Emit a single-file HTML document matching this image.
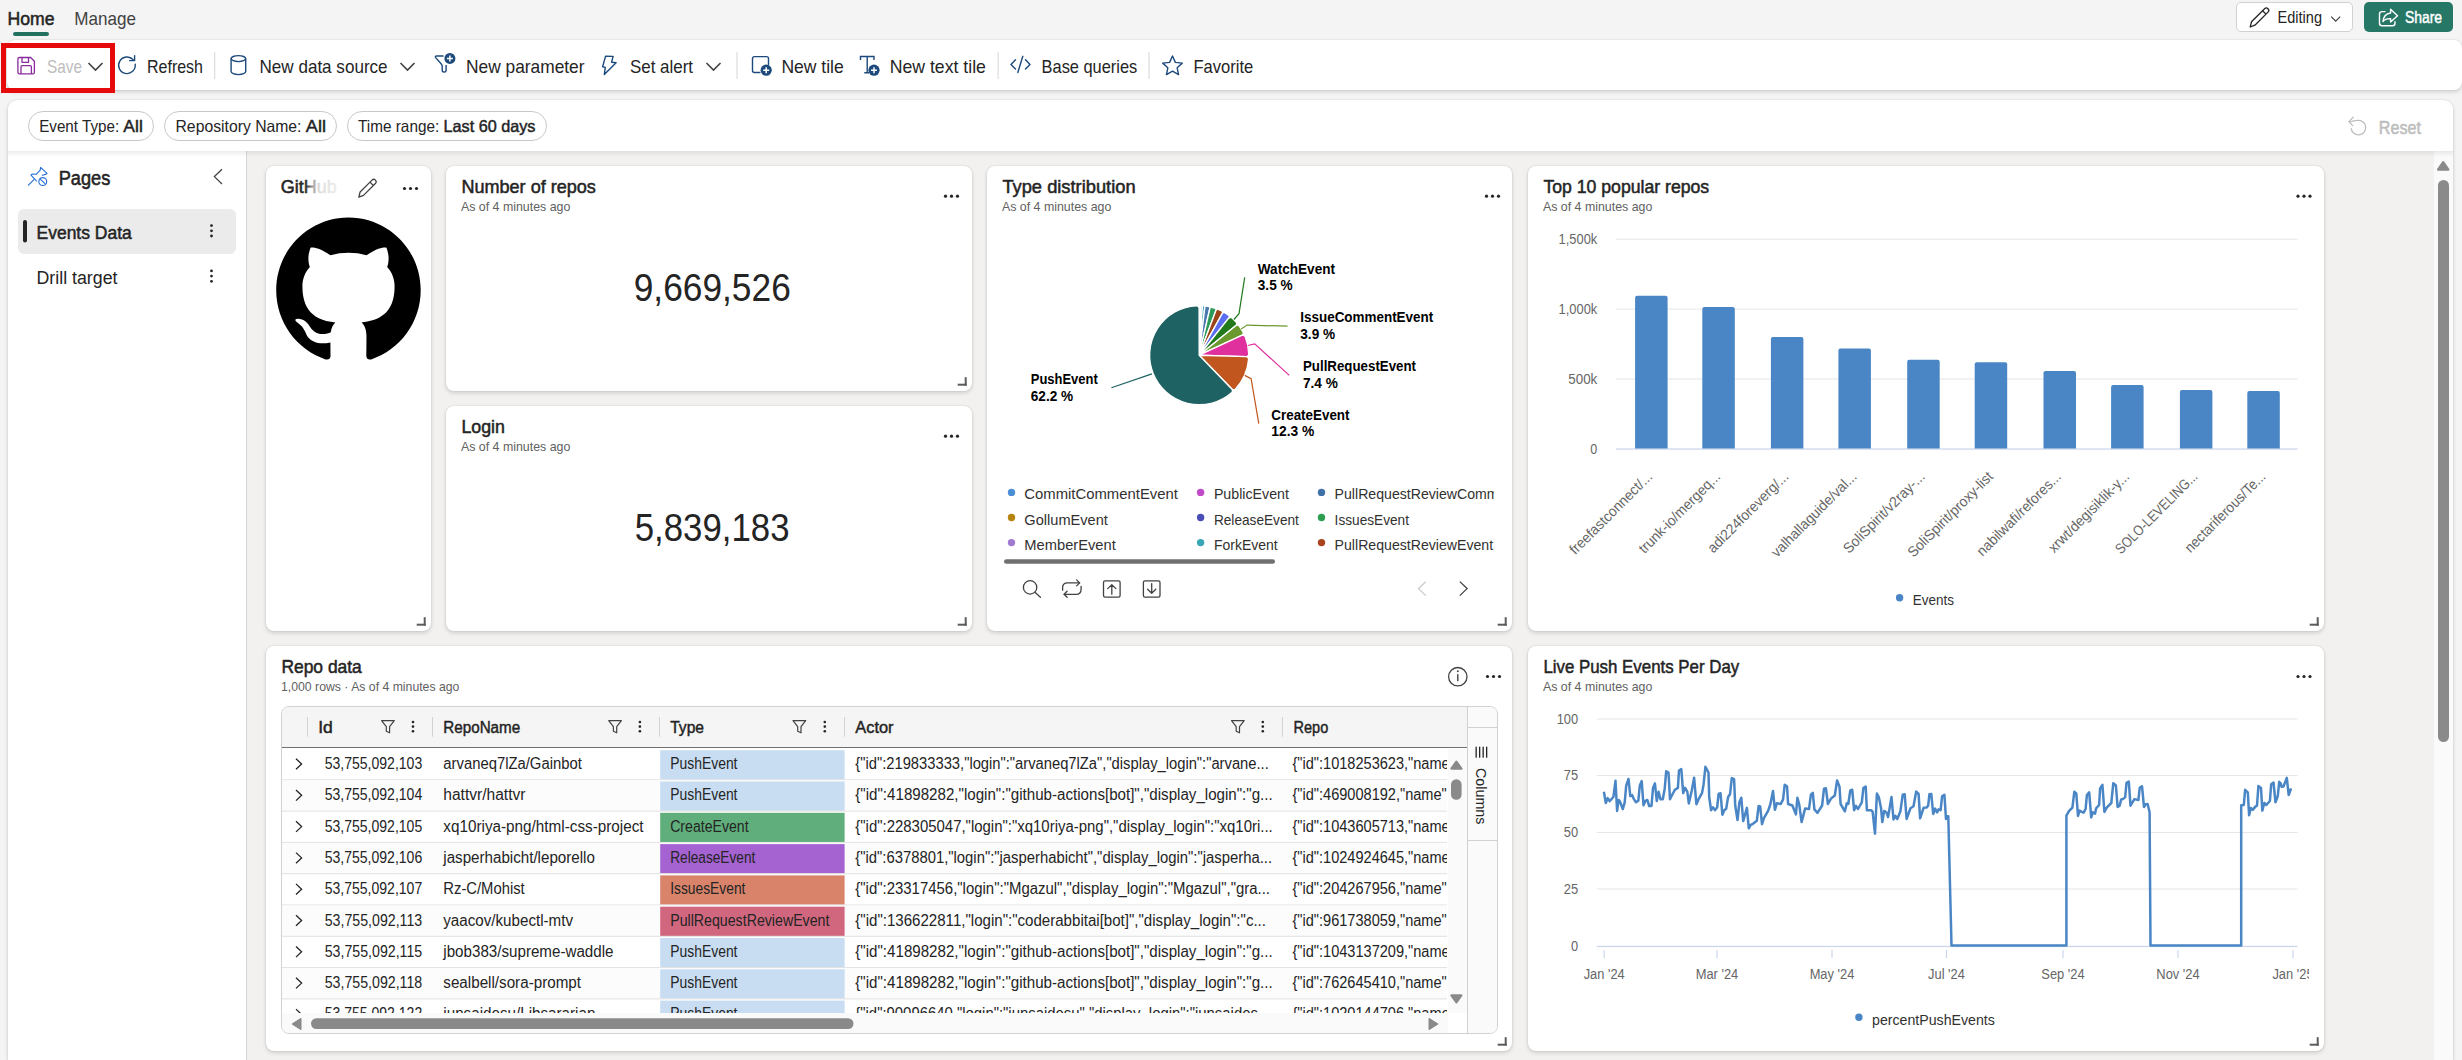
<!DOCTYPE html><html><head><meta charset="utf-8"><title>Dashboard</title><style>
*{box-sizing:border-box}html,body{margin:0;padding:0}
body{width:2462px;height:1060px;overflow:hidden;position:relative;background:#f4f4f4;font-family:"Liberation Sans",sans-serif}
.card{position:absolute;background:#fff;border-radius:8px;box-shadow:0 0 2px rgba(0,0,0,.12),0 2px 4px rgba(0,0,0,.14)}
svg.ov{position:absolute;left:0;top:0;z-index:10}
svg text{font-family:"Liberation Sans",sans-serif}
</style></head><body>
<div class="card" style="left:7px;top:40px;width:2455px;height:50px;border-radius:8px"></div>
<div style="position:absolute;left:1px;top:43px;width:114px;height:50px;border:5px solid #e60a0a;z-index:5"></div>
<div style="position:absolute;left:8px;top:100px;width:2445px;height:960px;background:#fff;border-radius:9px 9px 0 0;box-shadow:0 0 2px rgba(0,0,0,.12),0 2px 4px rgba(0,0,0,.14)"></div>
<div style="position:absolute;left:247px;top:151px;width:2187px;height:909px;background:#f2f1f0"></div>
<div style="position:absolute;left:246px;top:151px;width:1px;height:909px;background:#d6d6d6"></div>
<div style="position:absolute;left:2434px;top:151px;width:19px;height:909px;background:#fafafa"></div>
<div style="position:absolute;left:8px;top:151px;width:2445px;height:6px;background:linear-gradient(rgba(0,0,0,.07),rgba(0,0,0,0))"></div>
<div style="position:absolute;left:2236px;top:2px;width:117px;height:30px;border:1px solid #d1d1d1;border-radius:5px;background:#fff"></div>
<div style="position:absolute;left:2364px;top:2px;width:89px;height:30px;border-radius:5px;background:#277767"></div>
<div style="position:absolute;left:28px;top:111px;width:126px;height:30px;border:1px solid #c8c8c8;border-radius:15px"></div>
<div style="position:absolute;left:164px;top:111px;width:173px;height:30px;border:1px solid #c8c8c8;border-radius:15px"></div>
<div style="position:absolute;left:347px;top:111px;width:200px;height:30px;border:1px solid #c8c8c8;border-radius:15px"></div>
<div style="position:absolute;left:18px;top:209px;width:218px;height:45px;background:#ebebeb;border-radius:6px"></div>
<div class="card" style="left:266px;top:166px;width:165px;height:465px"></div>
<div class="card" style="left:446px;top:166px;width:526px;height:225px"></div>
<div class="card" style="left:446px;top:406px;width:526px;height:225px"></div>
<div class="card" style="left:987px;top:166px;width:525px;height:465px"></div>
<div class="card" style="left:1528px;top:166px;width:796px;height:465px"></div>
<div class="card" style="left:266px;top:646px;width:1246px;height:405px"></div>
<div class="card" style="left:1528px;top:646px;width:796px;height:405px"></div>
<div style="position:absolute;left:281px;top:706px;width:1217px;height:328px;border:1px solid #d1d1d1;border-radius:8px;overflow:hidden;background:#fff"><div style="position:absolute;left:0;top:0;width:1185px;height:41px;background:#f5f5f5;border-bottom:1.5px solid #707070"></div><div style="position:absolute;left:1185px;top:0;width:32px;height:328px;background:#fafafa;border-left:1px solid #d1d1d1"></div><div style="position:absolute;left:1185px;top:19.5px;width:32px;height:1px;background:#d1d1d1"></div><div style="position:absolute;left:1185px;top:133px;width:32px;height:1px;background:#d1d1d1"></div><div style="position:absolute;left:1166px;top:42px;width:19px;height:264px;background:#fafafa"></div><div style="position:absolute;left:0;top:306px;width:1166px;height:22px;background:#fafafa"></div></div>
<svg class="ov" width="2462" height="1060" viewBox="0 0 2462 1060">
<text x="7.60" y="24.90" font-size="19" font-weight="400" fill="#242424" stroke="#242424" stroke-width="0.53" stroke-linejoin="round" text-anchor="start" textLength="47.00" lengthAdjust="spacingAndGlyphs" >Home</text>
<text x="74.30" y="24.90" font-size="19" font-weight="400" fill="#424242" text-anchor="start" textLength="61.70" lengthAdjust="spacingAndGlyphs" >Manage</text>
<rect x="13" y="32" width="36" height="4" rx="2" fill="#23725f"/>
<path d="M2443.2 162.3 L2448.3 169.6 H2438.1 Z" fill="#8a8a8a" stroke="#8a8a8a" stroke-width="2.4" stroke-linejoin="round"/>
<rect x="2438" y="180" width="11" height="562" rx="5.5" fill="#8a8a8a"/>
<g fill="none" stroke="#8b2a9e" stroke-width="1.3" stroke-linejoin="round"><path d="M19.6 57.5 H30.6 L34.4 61.3 V72.2 Q34.4 73.9 32.7 73.9 H19.6 Q17.9 73.9 17.9 72.2 V59.2 Q17.9 57.5 19.6 57.5 Z"/><path d="M22 57.5 V62.3 H28.5 V57.5"/><path d="M21 73.9 V66.8 Q21 65.6 22.2 65.6 H30.2 Q31.4 65.6 31.4 66.8 V73.9"/></g>
<text x="47.00" y="73.20" font-size="18.5" font-weight="400" fill="#bdbdbd" text-anchor="start" textLength="35.00" lengthAdjust="spacingAndGlyphs" >Save</text>
<path d="M88.5 63 L95.5 70 L102.5 63" fill="none" stroke="#424242" stroke-width="1.6"/>
<g fill="none" stroke="#1d4a7c" stroke-width="1.4" stroke-linecap="round" stroke-linejoin="round"><path d="M133.2 59.8 A8.3 8.3 0 1 0 135.2 64.2"/><path d="M134.6 55.6 V60.6 H129.6"/></g>
<text x="147.00" y="73.20" font-size="18.5" font-weight="400" fill="#242424" text-anchor="start" textLength="56.00" lengthAdjust="spacingAndGlyphs" >Refresh</text>
<rect x="214.2" y="52" width="1" height="27" fill="#d6d6d6"/>
<g fill="none" stroke="#1d4a7c" stroke-width="1.4"><ellipse cx="238.4" cy="58.6" rx="7.3" ry="3"/><path d="M231.1 58.6 V71.6 A7.3 3 0 0 0 245.7 71.6 V58.6"/></g>
<text x="259.50" y="73.20" font-size="18.5" font-weight="400" fill="#242424" text-anchor="start" textLength="128.10" lengthAdjust="spacingAndGlyphs" >New data source</text>
<path d="M400.5 63 L407.5 70 L414.5 63" fill="none" stroke="#424242" stroke-width="1.6"/>
<g fill="none" stroke="#1d4a7c" stroke-width="1.4" stroke-linejoin="round"><path d="M443.6 56 H436.8 Q434.4 56 435.9 57.9 L441.3 64 Q442.2 65 442.2 66.4 V70.3 Q442.2 72.1 444.15 72.1 Q446.1 72.1 446.1 70.3 V65"/></g><circle cx="449.9" cy="58.4" r="5.5" fill="#1d4a7c"/><path d="M449.9 55.4 V61.4 M446.9 58.4 H452.9" stroke="#fff" stroke-width="1.5"/>
<text x="466.00" y="73.20" font-size="18.5" font-weight="400" fill="#242424" text-anchor="start" textLength="118.50" lengthAdjust="spacingAndGlyphs" >New parameter</text>
<path d="M605.6 56.1 L613.1 56.4 L611.6 62.2 L616.1 62.7 L604.3 74.6 L605.3 67.4 L602.6 66.7 Z" fill="none" stroke="#1d4a7c" stroke-width="1.4" stroke-linejoin="round"/>
<text x="630.00" y="73.20" font-size="18.5" font-weight="400" fill="#242424" text-anchor="start" textLength="63.00" lengthAdjust="spacingAndGlyphs" >Set alert</text>
<path d="M706.5 63 L713.5 70 L720.5 63" fill="none" stroke="#424242" stroke-width="1.6"/>
<rect x="736.5" y="52" width="1" height="27" fill="#d6d6d6"/>
<path d="M760.5 72.5 H754.5 Q752.5 72.5 752.5 70.5 V58.6 Q752.5 56.6 754.5 56.6 H766.5 Q768.5 56.6 768.5 58.6 V65" fill="none" stroke="#1d4a7c" stroke-width="1.4"/><circle cx="766.2" cy="70.2" r="5.6" fill="#1d4a7c"/><path d="M766.2 67.2 V73.2 M763.2 70.2 H769.2" stroke="#fff" stroke-width="1.5"/>
<text x="781.40" y="73.20" font-size="18.5" font-weight="400" fill="#242424" text-anchor="start" textLength="62.40" lengthAdjust="spacingAndGlyphs" >New tile</text>
<path d="M860.5 60 V56.5 H874 V60 M867.2 56.5 V72.7 M864.3 72.7 H869" fill="none" stroke="#1d4a7c" stroke-width="1.4"/><circle cx="874" cy="70.2" r="5.6" fill="#1d4a7c"/><path d="M874 67.2 V73.2 M871 70.2 H877" stroke="#fff" stroke-width="1.5"/>
<text x="889.70" y="73.20" font-size="18.5" font-weight="400" fill="#242424" text-anchor="start" textLength="96.20" lengthAdjust="spacingAndGlyphs" >New text tile</text>
<rect x="997.6" y="52" width="1" height="27" fill="#d6d6d6"/>
<path d="M1015.5 59.8 L1011 64.4 L1015.5 69 M1025.5 59.8 L1030 64.4 L1025.5 69 M1022.8 56.3 L1017.8 72.5" fill="none" stroke="#1d4a7c" stroke-width="1.4" stroke-linecap="round" stroke-linejoin="round"/>
<text x="1041.60" y="73.20" font-size="18.5" font-weight="400" fill="#242424" text-anchor="start" textLength="95.60" lengthAdjust="spacingAndGlyphs" >Base queries</text>
<rect x="1148.5" y="52" width="1" height="27" fill="#d6d6d6"/>
<path d="M1172.50,56.00 L1175.38,62.34 L1182.30,63.12 L1177.16,67.81 L1178.55,74.63 L1172.50,71.20 L1166.45,74.63 L1167.84,67.81 L1162.70,63.12 L1169.62,62.34 Z" fill="none" stroke="#1d4a7c" stroke-width="1.4" stroke-linejoin="round"/>
<text x="1193.50" y="73.20" font-size="18.5" font-weight="400" fill="#242424" text-anchor="start" textLength="59.80" lengthAdjust="spacingAndGlyphs" >Favorite</text>
<g fill="none" stroke="#242424" stroke-width="1.3" stroke-linejoin="round"><path d="M2250.2 27 L2251.5 21.8 L2264.6 8.7 Q2266.3 7 2268 8.7 Q2269.7 10.4 2268 12.1 L2254.9 25.2 Z"/><path d="M2262.6 10.7 L2266 14.1"/></g>
<text x="2277.50" y="23.10" font-size="16.5" font-weight="400" fill="#242424" text-anchor="start" textLength="44.50" lengthAdjust="spacingAndGlyphs" >Editing</text>
<path d="M2331.2 16.6 L2335.7 21.1 L2340.2 16.6" fill="none" stroke="#424242" stroke-width="1.2"/>
<g fill="none" stroke="#fff" stroke-width="1.4" stroke-linejoin="round" stroke-linecap="round"><path d="M2385 11.6 H2382 Q2379.5 11.6 2379.5 14.1 V23.3 Q2379.5 25.8 2382 25.8 H2392.5 Q2395 25.8 2395 23.3 V21.8"/><path d="M2390.6 9.3 L2397.5 15.7 L2390.6 21.9 V18.6 Q2385 18.4 2383 21.6 Q2383.6 13.9 2390.6 13 Z"/></g>
<text x="2404.90" y="23.20" font-size="16.5" font-weight="400" fill="#ffffff" stroke="#ffffff" stroke-width="0.46" stroke-linejoin="round" text-anchor="start" textLength="37.10" lengthAdjust="spacingAndGlyphs" >Share</text>
<text x="39.20" y="132.00" font-size="16.5" font-weight="400" fill="#242424" text-anchor="start" textLength="79.96" lengthAdjust="spacingAndGlyphs" >Event Type:</text>
<text x="123.38" y="132.00" font-size="16.5" font-weight="400" fill="#242424" stroke="#242424" stroke-width="0.46" stroke-linejoin="round" text-anchor="start" textLength="19.42" lengthAdjust="spacingAndGlyphs" >All</text>
<text x="175.50" y="132.00" font-size="16.5" font-weight="400" fill="#242424" text-anchor="start" textLength="126.01" lengthAdjust="spacingAndGlyphs" >Repository Name:</text>
<text x="305.88" y="132.00" font-size="16.5" font-weight="400" fill="#242424" stroke="#242424" stroke-width="0.46" stroke-linejoin="round" text-anchor="start" textLength="20.12" lengthAdjust="spacingAndGlyphs" >All</text>
<text x="358.00" y="132.00" font-size="16.5" font-weight="400" fill="#242424" text-anchor="start" textLength="81.22" lengthAdjust="spacingAndGlyphs" >Time range:</text>
<text x="443.48" y="132.00" font-size="16.5" font-weight="400" fill="#242424" stroke="#242424" stroke-width="0.46" stroke-linejoin="round" text-anchor="start" textLength="92.02" lengthAdjust="spacingAndGlyphs" >Last 60 days</text>
<g fill="none" stroke="#bdbdbd" stroke-width="1.3" stroke-linecap="round" stroke-linejoin="round"><path d="M2350.3 122 Q2353.6 120.1 2358.4 120.3 A7.3 7.3 0 1 1 2351.2 128.6"/><path d="M2353.2 117.3 L2348.9 121.6 L2352.6 125.6"/></g>
<text x="2378.80" y="133.90" font-size="18.5" font-weight="400" fill="#bdbdbd" stroke="#bdbdbd" stroke-width="0.51" stroke-linejoin="round" text-anchor="start" textLength="42.20" lengthAdjust="spacingAndGlyphs" >Reset</text>
<g fill="none" stroke="#2a72d6" stroke-width="1.15" stroke-linejoin="round" stroke-linecap="round"><path d="M28.4 185.2 L34 179.6"/><path d="M36.4 180.8 L31 175.2 Q31.3 174.2 32.2 174.1 L36.1 174.3 L40.2 170.2 L40.6 167.3 L47 173.4 L45.4 174.4 L42.2 175.2"/><circle cx="42.75" cy="181.5" r="3.95"/><path d="M40.2 179.1 L45.3 183.9"/></g>
<text x="58.70" y="184.70" font-size="19.5" font-weight="400" fill="#242424" stroke="#242424" stroke-width="0.54" stroke-linejoin="round" text-anchor="start" textLength="51.60" lengthAdjust="spacingAndGlyphs" >Pages</text>
<path d="M222 169.3 L214.4 176.6 L222 184" fill="none" stroke="#424242" stroke-width="1.3"/>
<rect x="23" y="220" width="4" height="22.6" rx="2" fill="#242424"/>
<text x="36.50" y="238.80" font-size="18" font-weight="400" fill="#242424" stroke="#242424" stroke-width="0.50" stroke-linejoin="round" text-anchor="start" textLength="95.30" lengthAdjust="spacingAndGlyphs" >Events Data</text>
<circle cx="211.5" cy="225.60000000000002" r="1.4" fill="#242424"/><circle cx="211.5" cy="230.8" r="1.4" fill="#242424"/><circle cx="211.5" cy="236.0" r="1.4" fill="#242424"/>
<text x="36.50" y="283.70" font-size="18" font-weight="400" fill="#242424" text-anchor="start" textLength="81.00" lengthAdjust="spacingAndGlyphs" >Drill target</text>
<circle cx="211.5" cy="270.90000000000003" r="1.4" fill="#242424"/><circle cx="211.5" cy="276.1" r="1.4" fill="#242424"/><circle cx="211.5" cy="281.3" r="1.4" fill="#242424"/>
<rect x="416.7" y="623.7" width="9" height="2" fill="#5c5c5c"/><rect x="423.7" y="617.2" width="2" height="8.5" fill="#5c5c5c"/>
<rect x="957.7" y="383.7" width="9" height="2" fill="#5c5c5c"/><rect x="964.7" y="377.2" width="2" height="8.5" fill="#5c5c5c"/>
<rect x="957.7" y="623.7" width="9" height="2" fill="#5c5c5c"/><rect x="964.7" y="617.2" width="2" height="8.5" fill="#5c5c5c"/>
<rect x="1497.7" y="623.7" width="9" height="2" fill="#5c5c5c"/><rect x="1504.7" y="617.2" width="2" height="8.5" fill="#5c5c5c"/>
<rect x="2309.7" y="623.7" width="9" height="2" fill="#5c5c5c"/><rect x="2316.7" y="617.2" width="2" height="8.5" fill="#5c5c5c"/>
<rect x="1497.7" y="1043.7" width="9" height="2" fill="#5c5c5c"/><rect x="1504.7" y="1037.2" width="2" height="8.5" fill="#5c5c5c"/>
<rect x="2309.7" y="1043.7" width="9" height="2" fill="#5c5c5c"/><rect x="2316.7" y="1037.2" width="2" height="8.5" fill="#5c5c5c"/>
<defs><linearGradient id="ghfade" x1="0" x2="1" y1="0" y2="0"><stop offset="0" stop-color="#242424"/><stop offset="0.44" stop-color="#2a2a2a"/><stop offset="0.56" stop-color="#9a9a9a"/><stop offset="0.68" stop-color="#dadada"/><stop offset="1" stop-color="#ececec"/></linearGradient></defs>
<text x="280.70" y="192.90" font-size="18.5" font-weight="400" fill="url(#ghfade)" stroke="url(#ghfade)" stroke-width="0.51" stroke-linejoin="round" text-anchor="start" textLength="56.00" lengthAdjust="spacingAndGlyphs" >GitHub</text>
<g fill="none" stroke="#424242" stroke-width="1.3" stroke-linejoin="round"><path d="M358.8 197.2 L360.1 192 L372 180.1 Q373.7 178.4 375.4 180.1 Q377.1 181.8 375.4 183.5 L363.5 195.4 Z"/><path d="M370 182.1 L373.4 185.5"/></g>
<circle cx="404.5" cy="188.5" r="1.6" fill="#242424"/><circle cx="410.5" cy="188.5" r="1.6" fill="#242424"/><circle cx="416.5" cy="188.5" r="1.6" fill="#242424"/>
<path d="M48.854 0C21.839 0 0 22 0 49.217c0 21.756 13.993 40.172 33.405 46.69 2.427.49 3.316-1.059 3.316-2.362 0-1.141-.08-5.052-.08-9.127-13.59 2.934-16.42-5.867-16.42-5.867-2.184-5.704-5.42-7.17-5.42-7.17-4.448-3.015.324-3.015.324-3.015 4.934.326 7.523 5.052 7.523 5.052 4.367 7.496 11.404 5.378 14.235 4.074.404-3.178 1.699-5.378 3.074-6.6-10.839-1.141-22.243-5.378-22.243-24.283 0-5.378 1.94-9.778 5.014-13.2-.485-1.222-2.184-6.275.486-13.038 0 0 4.125-1.304 13.426 5.052a46.97 46.97 0 0 1 12.214-1.63c4.125 0 8.33.571 12.213 1.63 9.302-6.356 13.427-5.052 13.427-5.052 2.67 6.763.97 11.816.485 13.038 3.155 3.422 5.015 7.822 5.015 13.2 0 18.905-11.404 23.06-22.324 24.283 1.78 1.548 3.316 4.481 3.316 9.126 0 6.6-.08 11.897-.08 13.526 0 1.304.89 2.853 3.316 2.364 19.412-6.52 33.405-24.935 33.405-46.691C97.707 22 75.788 0 48.854 0z" fill="#000" transform="translate(276.2,217.5) scale(1.48)"/>
<text x="461.40" y="192.80" font-size="18.5" font-weight="400" fill="#242424" stroke="#242424" stroke-width="0.51" stroke-linejoin="round" text-anchor="start" textLength="134.50" lengthAdjust="spacingAndGlyphs" >Number of repos</text>
<text x="461.00" y="210.80" font-size="13" font-weight="400" fill="#616161" text-anchor="start" textLength="109.30" lengthAdjust="spacingAndGlyphs" >As of 4 minutes ago</text>
<circle cx="945.5" cy="196.2" r="1.6" fill="#242424"/><circle cx="951.5" cy="196.2" r="1.6" fill="#242424"/><circle cx="957.5" cy="196.2" r="1.6" fill="#242424"/>
<text x="633.70" y="301.20" font-size="38.5" font-weight="400" fill="#242424" text-anchor="start" textLength="157.10" lengthAdjust="spacingAndGlyphs" >9,669,526</text>
<text x="461.40" y="432.80" font-size="18.5" font-weight="400" fill="#242424" stroke="#242424" stroke-width="0.51" stroke-linejoin="round" text-anchor="start" textLength="43.50" lengthAdjust="spacingAndGlyphs" >Login</text>
<text x="461.00" y="450.80" font-size="13" font-weight="400" fill="#616161" text-anchor="start" textLength="109.30" lengthAdjust="spacingAndGlyphs" >As of 4 minutes ago</text>
<circle cx="945.5" cy="436.2" r="1.6" fill="#242424"/><circle cx="951.5" cy="436.2" r="1.6" fill="#242424"/><circle cx="957.5" cy="436.2" r="1.6" fill="#242424"/>
<text x="634.70" y="541.20" font-size="38.5" font-weight="400" fill="#242424" text-anchor="start" textLength="154.80" lengthAdjust="spacingAndGlyphs" >5,839,183</text>
<text x="1002.40" y="192.80" font-size="18.5" font-weight="400" fill="#242424" stroke="#242424" stroke-width="0.51" stroke-linejoin="round" text-anchor="start" textLength="133.20" lengthAdjust="spacingAndGlyphs" >Type distribution</text>
<text x="1002.00" y="210.80" font-size="13" font-weight="400" fill="#616161" text-anchor="start" textLength="109.30" lengthAdjust="spacingAndGlyphs" >As of 4 minutes ago</text>
<circle cx="1486.5" cy="196.2" r="1.6" fill="#242424"/><circle cx="1492.5" cy="196.2" r="1.6" fill="#242424"/><circle cx="1498.5" cy="196.2" r="1.6" fill="#242424"/>
<path d="M1199.20 355.20 L1199.20 305.60 A49.6 49.6 0 0 1 1200.53 305.62 Z" fill="#c4a6e6" stroke="#fff" stroke-width="1.4" stroke-linejoin="round"/>
<path d="M1199.20 355.20 L1200.52 306.04 A0.42 0.42 0 0 1 1200.96 305.63 A49.6 49.6 0 0 1 1201.97 305.68 A0.42 0.42 0 0 1 1202.37 306.12 Z" fill="#8a8ad8" stroke="#fff" stroke-width="1.4" stroke-linejoin="round"/>
<path d="M1199.20 355.20 L1202.36 306.29 A0.58 0.58 0 0 1 1202.98 305.74 A49.6 49.6 0 0 1 1204.38 305.87 A0.58 0.58 0 0 1 1204.90 306.52 Z" fill="#3aa6b5" stroke="#fff" stroke-width="1.4" stroke-linejoin="round"/>
<path d="M1199.20 355.20 L1204.82 307.14 A1.20 1.20 0 0 1 1206.18 306.09 A49.6 49.6 0 0 1 1209.01 306.58 A1.20 1.20 0 0 1 1209.95 308.02 Z" fill="#4a78b0" stroke="#fff" stroke-width="1.4" stroke-linejoin="round"/>
<path d="M1199.20 355.20 L1209.88 308.32 A1.50 1.50 0 0 1 1211.72 307.21 A49.6 49.6 0 0 1 1215.14 308.23 A1.50 1.50 0 0 1 1216.06 310.18 Z" fill="#2e9a5a" stroke="#fff" stroke-width="1.4" stroke-linejoin="round"/>
<path d="M1199.20 355.20 L1216.01 310.31 A1.64 1.64 0 0 1 1218.18 309.37 A49.6 49.6 0 0 1 1221.71 311.00 A1.64 1.64 0 0 1 1222.40 313.26 Z" fill="#9c4516" stroke="#fff" stroke-width="1.4" stroke-linejoin="round"/>
<path d="M1199.20 355.20 L1222.29 313.46 A1.86 1.86 0 0 1 1224.88 312.77 A49.6 49.6 0 0 1 1228.54 315.21 A1.86 1.86 0 0 1 1228.90 317.87 Z" fill="#5b6ef0" stroke="#fff" stroke-width="1.4" stroke-linejoin="round"/>
<path d="M1199.20 355.20 L1228.51 318.35 A2.45 2.45 0 0 1 1232.06 318.04 A49.6 49.6 0 0 1 1236.13 322.09 A2.45 2.45 0 0 1 1235.84 325.63 Z" fill="#237a1d" stroke="#fff" stroke-width="1.4" stroke-linejoin="round"/>
<path d="M1199.20 355.20 L1235.72 325.73 A2.60 2.60 0 0 1 1239.46 326.24 A49.6 49.6 0 0 1 1242.97 331.86 A2.60 2.60 0 0 1 1241.77 335.44 Z" fill="#6a9a2e" stroke="#fff" stroke-width="1.4" stroke-linejoin="round"/>
<path d="M1199.20 355.20 L1241.77 335.44 A2.60 2.60 0 0 1 1245.28 336.84 A49.6 49.6 0 0 1 1248.78 353.93 A2.60 2.60 0 0 1 1246.11 356.59 Z" fill="#e0309e" stroke="#fff" stroke-width="1.4" stroke-linejoin="round"/>
<path d="M1199.20 355.20 L1246.11 356.59 A2.60 2.60 0 0 1 1248.62 359.41 A49.6 49.6 0 0 1 1235.58 388.92 A2.60 2.60 0 0 1 1231.80 388.96 Z" fill="#c2561f" stroke="#fff" stroke-width="1.4" stroke-linejoin="round"/>
<path d="M1199.20 355.20 L1231.80 388.96 A2.60 2.60 0 0 1 1231.63 392.73 A49.6 49.6 0 1 1 1196.37 305.68 A2.60 2.60 0 0 1 1199.12 308.27 Z" fill="#1f6263" stroke="#fff" stroke-width="1.4" stroke-linejoin="round"/>
<polyline points="1233.9,319.5 1239.0,313.7 1244.7,277.4" fill="none" stroke="#1f7a1f" stroke-width="1.2"/>
<polyline points="1241.2,328.9 1247.0,325.1 1287.5,326.2" fill="none" stroke="#6a9a2e" stroke-width="1.2"/>
<polyline points="1247.8,345.5 1254.7,343.8 1289.3,375.4" fill="none" stroke="#e0309e" stroke-width="1.2"/>
<polyline points="1244.7,375.4 1251.1,378.7 1258.8,423.7" fill="none" stroke="#c2561f" stroke-width="1.2"/>
<polyline points="1151.9,373.9 1111.4,387.8" fill="none" stroke="#1f6263" stroke-width="1.2"/>
<text x="1257.80" y="273.60" font-size="14" font-weight="700" fill="#000" text-anchor="start" textLength="77.20" lengthAdjust="spacingAndGlyphs" >WatchEvent</text>
<text x="1257.80" y="290.40" font-size="14" font-weight="700" fill="#000" text-anchor="start" textLength="34.80" lengthAdjust="spacingAndGlyphs" >3.5 %</text>
<text x="1300.30" y="322.20" font-size="14" font-weight="700" fill="#000" text-anchor="start" textLength="132.90" lengthAdjust="spacingAndGlyphs" >IssueCommentEvent</text>
<text x="1300.30" y="339.00" font-size="14" font-weight="700" fill="#000" text-anchor="start" textLength="34.80" lengthAdjust="spacingAndGlyphs" >3.9 %</text>
<text x="1303.00" y="370.80" font-size="14" font-weight="700" fill="#000" text-anchor="start" textLength="113.00" lengthAdjust="spacingAndGlyphs" >PullRequestEvent</text>
<text x="1303.00" y="387.60" font-size="14" font-weight="700" fill="#000" text-anchor="start" textLength="34.80" lengthAdjust="spacingAndGlyphs" >7.4 %</text>
<text x="1271.30" y="419.60" font-size="14" font-weight="700" fill="#000" text-anchor="start" textLength="78.20" lengthAdjust="spacingAndGlyphs" >CreateEvent</text>
<text x="1271.30" y="436.40" font-size="14" font-weight="700" fill="#000" text-anchor="start" textLength="43.00" lengthAdjust="spacingAndGlyphs" >12.3 %</text>
<text x="1030.80" y="383.90" font-size="14" font-weight="700" fill="#000" text-anchor="start" textLength="66.90" lengthAdjust="spacingAndGlyphs" >PushEvent</text>
<text x="1030.80" y="400.70" font-size="14" font-weight="700" fill="#000" text-anchor="start" textLength="42.40" lengthAdjust="spacingAndGlyphs" >62.2 %</text>
<defs><clipPath id="legclip"><rect x="995" y="470" width="499" height="100"/></clipPath></defs>
<g clip-path="url(#legclip)">
<circle cx="1011.5" cy="492.4" r="3.7" fill="#4d8fd6"/>
<text x="1024.30" y="499.40" font-size="14.5" font-weight="400" fill="#323130" text-anchor="start" textLength="153.60" lengthAdjust="spacingAndGlyphs" >CommitCommentEvent</text>
<circle cx="1011.5" cy="517.5" r="3.7" fill="#b5850f"/>
<text x="1024.30" y="524.50" font-size="14.5" font-weight="400" fill="#323130" text-anchor="start" textLength="83.60" lengthAdjust="spacingAndGlyphs" >GollumEvent</text>
<circle cx="1011.5" cy="542.6" r="3.7" fill="#a07ad0"/>
<text x="1024.30" y="549.60" font-size="14.5" font-weight="400" fill="#323130" text-anchor="start" textLength="91.50" lengthAdjust="spacingAndGlyphs" >MemberEvent</text>
<circle cx="1200.6" cy="492.4" r="3.7" fill="#c04ac8"/>
<text x="1213.90" y="499.40" font-size="14.5" font-weight="400" fill="#323130" text-anchor="start" textLength="75.00" lengthAdjust="spacingAndGlyphs" >PublicEvent</text>
<circle cx="1200.6" cy="517.5" r="3.7" fill="#4a4db5"/>
<text x="1213.90" y="524.50" font-size="14.5" font-weight="400" fill="#323130" text-anchor="start" textLength="85.00" lengthAdjust="spacingAndGlyphs" >ReleaseEvent</text>
<circle cx="1200.6" cy="542.6" r="3.7" fill="#3aa6b5"/>
<text x="1213.90" y="549.60" font-size="14.5" font-weight="400" fill="#323130" text-anchor="start" textLength="63.80" lengthAdjust="spacingAndGlyphs" >ForkEvent</text>
<circle cx="1321.5" cy="492.4" r="3.7" fill="#3f72a8"/>
<text x="1334.60" y="499.40" font-size="14.5" font-weight="400" fill="#323130" text-anchor="start" textLength="183.59" lengthAdjust="spacingAndGlyphs" >PullRequestReviewComment</text>
<circle cx="1321.5" cy="517.5" r="3.7" fill="#2e9e4f"/>
<text x="1334.60" y="524.50" font-size="14.5" font-weight="400" fill="#323130" text-anchor="start" textLength="74.40" lengthAdjust="spacingAndGlyphs" >IssuesEvent</text>
<circle cx="1321.5" cy="542.6" r="3.7" fill="#a8431b"/>
<text x="1334.60" y="549.60" font-size="14.5" font-weight="400" fill="#323130" text-anchor="start" textLength="158.50" lengthAdjust="spacingAndGlyphs" >PullRequestReviewEvent</text>
</g>
<rect x="1004" y="559.2" width="271" height="4.6" rx="2.3" fill="#707070"/>
<g fill="none" stroke="#424242" stroke-width="1.3" stroke-linecap="round" stroke-linejoin="round"><circle cx="1030.1" cy="587.4" r="6.7"/><path d="M1035 592.3 L1040.4 597.2"/><path d="M1062.6 590.2 V587.8 Q1062.6 582.9 1067.5 582.9 H1079.6"/><path d="M1076.6 579.9 L1079.6 582.9 L1076.6 585.9"/><path d="M1081.1 586.4 V589.2 Q1081.1 594.3 1076 594.3 H1064.1"/><path d="M1067.1 591.3 L1064.1 594.3 L1067.1 597.3"/><rect x="1103.5" y="580.9" width="16.6" height="16.3" rx="1.6"/><path d="M1111.8 594.2 V584.6 M1107.7 588.6 L1111.8 584.6 L1115.9 588.6"/><rect x="1143.4" y="580.9" width="16.6" height="16.3" rx="1.6"/><path d="M1151.7 583.6 V593.3 M1147.6 589.3 L1151.7 593.3 L1155.8 589.3"/></g>
<path d="M1425.8 581.6 L1418.5 588.6 L1425.8 595.6" fill="none" stroke="#c8c8c8" stroke-width="1.3"/>
<path d="M1459.8 581.6 L1467.1 588.6 L1459.8 595.6" fill="none" stroke="#424242" stroke-width="1.3"/>
<text x="1543.40" y="192.80" font-size="18.5" font-weight="400" fill="#242424" stroke="#242424" stroke-width="0.51" stroke-linejoin="round" text-anchor="start" textLength="165.80" lengthAdjust="spacingAndGlyphs" >Top 10 popular repos</text>
<text x="1543.00" y="210.80" font-size="13" font-weight="400" fill="#616161" text-anchor="start" textLength="109.30" lengthAdjust="spacingAndGlyphs" >As of 4 minutes ago</text>
<circle cx="2298" cy="196.2" r="1.6" fill="#242424"/><circle cx="2304" cy="196.2" r="1.6" fill="#242424"/><circle cx="2310" cy="196.2" r="1.6" fill="#242424"/>
<rect x="1616" y="238.7" width="681.6" height="1" fill="#e6e6e6"/>
<text x="1597.30" y="243.80" font-size="14" font-weight="400" fill="#666666" text-anchor="end" textLength="38.70" lengthAdjust="spacingAndGlyphs" >1,500k</text>
<rect x="1616" y="308.6" width="681.6" height="1" fill="#e6e6e6"/>
<text x="1597.30" y="313.70" font-size="14" font-weight="400" fill="#666666" text-anchor="end" textLength="38.70" lengthAdjust="spacingAndGlyphs" >1,000k</text>
<rect x="1616" y="378.5" width="681.6" height="1" fill="#e6e6e6"/>
<text x="1597.30" y="383.60" font-size="14" font-weight="400" fill="#666666" text-anchor="end" textLength="29.00" lengthAdjust="spacingAndGlyphs" >500k</text>
<text x="1597.30" y="453.60" font-size="14" font-weight="400" fill="#666666" text-anchor="end" textLength="7.00" lengthAdjust="spacingAndGlyphs" >0</text>
<rect x="1616" y="448.4" width="681.6" height="1.3" fill="#ccd6eb"/>
<path d="M1635.1 448.4 V297.8 Q1635.1 295.8 1637.1 295.8 H1665.6 Q1667.6 295.8 1667.6 297.8 V448.4 Z" fill="#4a86c5"/>
<path d="M1702.3 448.4 V308.9 Q1702.3 306.9 1704.3 306.9 H1732.8 Q1734.8 306.9 1734.8 308.9 V448.4 Z" fill="#4a86c5"/>
<path d="M1770.9 448.4 V339.1 Q1770.9 337.1 1772.9 337.1 H1801.4 Q1803.4 337.1 1803.4 339.1 V448.4 Z" fill="#4a86c5"/>
<path d="M1838.4 448.4 V350.4 Q1838.4 348.4 1840.4 348.4 H1868.9 Q1870.9 348.4 1870.9 350.4 V448.4 Z" fill="#4a86c5"/>
<path d="M1907.2 448.4 V361.8 Q1907.2 359.8 1909.2 359.8 H1937.7 Q1939.7 359.8 1939.7 361.8 V448.4 Z" fill="#4a86c5"/>
<path d="M1974.7 448.4 V364.2 Q1974.7 362.2 1976.7 362.2 H2005.2 Q2007.2 362.2 2007.2 364.2 V448.4 Z" fill="#4a86c5"/>
<path d="M2043.5 448.4 V372.9 Q2043.5 370.9 2045.5 370.9 H2074.0 Q2076.0 370.9 2076.0 372.9 V448.4 Z" fill="#4a86c5"/>
<path d="M2111.1 448.4 V386.9 Q2111.1 384.9 2113.1 384.9 H2141.6 Q2143.6 384.9 2143.6 386.9 V448.4 Z" fill="#4a86c5"/>
<path d="M2179.9 448.4 V391.9 Q2179.9 389.9 2181.9 389.9 H2210.4 Q2212.4 389.9 2212.4 391.9 V448.4 Z" fill="#4a86c5"/>
<path d="M2247.3 448.4 V392.9 Q2247.3 390.9 2249.3 390.9 H2277.8 Q2279.8 390.9 2279.8 392.9 V448.4 Z" fill="#4a86c5"/>
<text x="0.00" y="0.00" font-size="14.5" font-weight="400" fill="#666666" text-anchor="end" textLength="110.07" lengthAdjust="spacingAndGlyphs" transform="translate(1653.1,477.5) rotate(-45)">freefastconnect/...</text>
<text x="0.00" y="0.00" font-size="14.5" font-weight="400" fill="#666666" text-anchor="end" textLength="108.52" lengthAdjust="spacingAndGlyphs" transform="translate(1721.2,477.5) rotate(-45)">trunk-io/mergeq...</text>
<text x="0.00" y="0.00" font-size="14.5" font-weight="400" fill="#666666" text-anchor="end" textLength="107.77" lengthAdjust="spacingAndGlyphs" transform="translate(1789.4,477.5) rotate(-45)">adi224foreverg/...</text>
<text x="0.00" y="0.00" font-size="14.5" font-weight="400" fill="#666666" text-anchor="end" textLength="113.93" lengthAdjust="spacingAndGlyphs" transform="translate(1857.6,477.5) rotate(-45)">valhallaguide/val...</text>
<text x="0.00" y="0.00" font-size="14.5" font-weight="400" fill="#666666" text-anchor="end" textLength="108.50" lengthAdjust="spacingAndGlyphs" transform="translate(1925.7,477.5) rotate(-45)">SoliSpirit/v2ray-...</text>
<text x="0.00" y="0.00" font-size="14.5" font-weight="400" fill="#666666" text-anchor="end" textLength="113.88" lengthAdjust="spacingAndGlyphs" transform="translate(1993.9,477.5) rotate(-45)">SoliSpirit/proxy-list</text>
<text x="0.00" y="0.00" font-size="14.5" font-weight="400" fill="#666666" text-anchor="end" textLength="112.37" lengthAdjust="spacingAndGlyphs" transform="translate(2062.0,477.5) rotate(-45)">nabilwafi/refores...</text>
<text x="0.00" y="0.00" font-size="14.5" font-weight="400" fill="#666666" text-anchor="end" textLength="107.46" lengthAdjust="spacingAndGlyphs" transform="translate(2130.2,477.5) rotate(-45)">xrwt/degisiklik-y...</text>
<text x="0.00" y="0.00" font-size="14.5" font-weight="400" fill="#666666" text-anchor="end" textLength="109.36" lengthAdjust="spacingAndGlyphs" transform="translate(2198.4,477.5) rotate(-45)">SOLO-LEVELING...</text>
<text x="0.00" y="0.00" font-size="14.5" font-weight="400" fill="#666666" text-anchor="end" textLength="107.56" lengthAdjust="spacingAndGlyphs" transform="translate(2266.5,477.5) rotate(-45)">nectariferous/Te...</text>
<circle cx="1899.6" cy="597.8" r="3.7" fill="#4a86c5"/>
<text x="1912.70" y="605.20" font-size="14.5" font-weight="400" fill="#323130" text-anchor="start" textLength="41.20" lengthAdjust="spacingAndGlyphs" >Events</text>
<text x="1543.40" y="672.80" font-size="18.5" font-weight="400" fill="#242424" stroke="#242424" stroke-width="0.51" stroke-linejoin="round" text-anchor="start" textLength="195.80" lengthAdjust="spacingAndGlyphs" >Live Push Events Per Day</text>
<text x="1543.00" y="690.80" font-size="13" font-weight="400" fill="#616161" text-anchor="start" textLength="109.30" lengthAdjust="spacingAndGlyphs" >As of 4 minutes ago</text>
<circle cx="2298" cy="676.5" r="1.6" fill="#242424"/><circle cx="2304" cy="676.5" r="1.6" fill="#242424"/><circle cx="2310" cy="676.5" r="1.6" fill="#242424"/>
<rect x="1596.6" y="718.5" width="701" height="1" fill="#e6e6e6"/>
<text x="1578.20" y="723.60" font-size="14" font-weight="400" fill="#666666" text-anchor="end" textLength="21.49" lengthAdjust="spacingAndGlyphs" >100</text>
<rect x="1596.6" y="775.0" width="701" height="1" fill="#e6e6e6"/>
<text x="1578.20" y="780.10" font-size="14" font-weight="400" fill="#666666" text-anchor="end" textLength="14.33" lengthAdjust="spacingAndGlyphs" >75</text>
<rect x="1596.6" y="832.0" width="701" height="1" fill="#e6e6e6"/>
<text x="1578.20" y="837.10" font-size="14" font-weight="400" fill="#666666" text-anchor="end" textLength="14.33" lengthAdjust="spacingAndGlyphs" >50</text>
<rect x="1596.6" y="888.5" width="701" height="1" fill="#e6e6e6"/>
<text x="1578.20" y="893.60" font-size="14" font-weight="400" fill="#666666" text-anchor="end" textLength="14.33" lengthAdjust="spacingAndGlyphs" >25</text>
<text x="1578.20" y="950.60" font-size="14" font-weight="400" fill="#666666" text-anchor="end" textLength="7.16" lengthAdjust="spacingAndGlyphs" >0</text>
<rect x="1596.6" y="945.8" width="701" height="1.3" fill="#ccd6eb"/>
<defs><clipPath id="lpclip"><rect x="1540" y="950" width="769" height="40"/></clipPath></defs>
<g clip-path="url(#lpclip)">
<rect x="1603.6" y="946" width="1.2" height="12" fill="#ccd6eb"/>
<text x="1604.20" y="978.70" font-size="14" font-weight="400" fill="#666666" text-anchor="middle" textLength="41.13" lengthAdjust="spacingAndGlyphs" >Jan &#x27;24</text>
<rect x="1716.4" y="946" width="1.2" height="12" fill="#ccd6eb"/>
<text x="1717.00" y="978.70" font-size="14" font-weight="400" fill="#666666" text-anchor="middle" textLength="42.55" lengthAdjust="spacingAndGlyphs" >Mar &#x27;24</text>
<rect x="1831.4" y="946" width="1.2" height="12" fill="#ccd6eb"/>
<text x="1832.00" y="978.70" font-size="14" font-weight="400" fill="#666666" text-anchor="middle" textLength="44.70" lengthAdjust="spacingAndGlyphs" >May &#x27;24</text>
<rect x="1945.9" y="946" width="1.2" height="12" fill="#ccd6eb"/>
<text x="1946.50" y="978.70" font-size="14" font-weight="400" fill="#666666" text-anchor="middle" textLength="36.83" lengthAdjust="spacingAndGlyphs" >Jul &#x27;24</text>
<rect x="2062.4" y="946" width="1.2" height="12" fill="#ccd6eb"/>
<text x="2063.00" y="978.70" font-size="14" font-weight="400" fill="#666666" text-anchor="middle" textLength="43.28" lengthAdjust="spacingAndGlyphs" >Sep &#x27;24</text>
<rect x="2177.4" y="946" width="1.2" height="12" fill="#ccd6eb"/>
<text x="2178.00" y="978.70" font-size="14" font-weight="400" fill="#666666" text-anchor="middle" textLength="43.27" lengthAdjust="spacingAndGlyphs" >Nov &#x27;24</text>
<rect x="2292.4" y="946" width="1.2" height="12" fill="#ccd6eb"/>
<text x="2293.00" y="978.70" font-size="14" font-weight="400" fill="#666666" text-anchor="middle" textLength="41.13" lengthAdjust="spacingAndGlyphs" >Jan &#x27;25</text>
</g>
<polyline points="1603.9,791.7 1605.8,803.0 1607.7,798.1 1609.6,801.1 1613.4,797.0 1615.5,780.8 1617.1,810.9 1618.6,800.0 1619.8,801.1 1622.8,809.1 1624.7,802.3 1626.2,785.7 1628.5,778.9 1630.3,796.2 1632.2,795.1 1633.7,798.9 1636.0,802.3 1638.3,800.8 1639.8,785.7 1641.7,781.1 1643.5,805.3 1645.4,800.8 1647.3,800.0 1649.2,806.0 1651.5,806.0 1653.0,787.9 1654.9,783.4 1656.8,801.1 1658.6,791.7 1660.5,799.2 1662.8,799.2 1664.7,788.7 1666.2,771.3 1668.5,772.5 1670.0,799.2 1672.6,794.0 1674.9,789.8 1677.9,787.9 1679.0,770.6 1681.3,769.1 1683.2,793.2 1685.1,787.9 1687.3,791.7 1688.8,803.4 1691.8,790.2 1694.1,777.7 1696.4,804.2 1698.6,799.2 1702.0,793.2 1703.5,784.9 1705.4,766.8 1708.5,772.5 1709.2,797.0 1711.1,810.2 1713.0,807.2 1714.9,810.2 1717.1,807.5 1718.6,794.0 1720.5,793.2 1722.4,814.7 1724.3,810.2 1726.2,808.7 1728.1,797.0 1730.0,794.3 1731.8,778.1 1734.1,779.2 1735.2,805.3 1737.5,820.0 1739.4,802.3 1741.3,797.7 1743.2,821.1 1746.9,807.9 1748.8,828.3 1750.7,824.9 1753.0,823.8 1756.8,820.8 1758.6,806.0 1760.2,806.4 1762.0,824.2 1763.9,818.1 1768.1,810.9 1770.3,804.5 1773.0,790.9 1774.9,809.8 1776.9,803.2 1780.8,804.0 1783.1,799.4 1784.7,784.7 1787.0,786.2 1788.1,804.0 1792.4,805.5 1795.9,814.4 1797.4,797.8 1799.3,804.8 1801.6,822.1 1805.1,808.6 1809.0,809.0 1810.9,794.7 1812.8,792.8 1814.4,809.4 1817.5,812.9 1822.1,805.5 1824.0,788.6 1825.9,788.2 1827.9,804.0 1831.0,798.6 1834.8,795.5 1837.1,780.5 1839.5,786.6 1840.6,804.0 1844.9,811.3 1846.8,803.2 1848.3,804.0 1850.3,790.5 1852.2,789.7 1854.1,810.2 1856.0,805.9 1858.0,809.0 1861.8,802.4 1863.4,787.8 1865.7,786.6 1866.9,810.2 1871.1,810.2 1872.6,811.7 1875.0,833.7 1876.9,793.6 1878.8,797.0 1881.1,808.6 1882.3,822.1 1884.2,810.9 1886.5,812.5 1888.1,817.1 1891.5,797.0 1893.5,819.4 1895.4,815.9 1897.3,819.0 1900.4,811.3 1902.7,794.7 1904.7,794.3 1906.6,819.0 1910.5,808.2 1913.5,806.3 1916.2,791.6 1918.6,794.0 1920.1,818.3 1923.6,807.8 1926.7,807.5 1928.2,805.5 1929.4,794.3 1931.3,794.0 1933.2,814.0 1935.1,808.6 1937.1,812.5 1938.6,809.4 1940.6,810.2 1942.1,796.3 1944.4,794.7 1946.0,819.0 1947.5,816.3 1948.3,816.3 1951.5,945.4 2066.4,945.4 2066.4,815.6 2069.1,810.9 2072.4,807.6 2074.3,791.8 2076.3,793.4 2078.0,815.9 2079.6,810.6 2081.3,811.6 2083.6,812.6 2085.6,809.0 2086.9,795.1 2089.2,792.4 2091.2,817.5 2092.8,812.3 2095.1,813.6 2096.1,808.3 2099.1,805.0 2100.1,788.5 2102.4,784.9 2104.4,811.9 2106.7,807.6 2111.3,803.0 2113.3,783.2 2115.9,785.5 2117.6,807.0 2119.6,805.7 2121.2,799.4 2122.9,799.1 2125.2,797.1 2126.5,782.9 2128.8,781.6 2130.5,805.7 2134.4,799.1 2138.4,800.0 2139.7,787.8 2142.0,786.2 2144.0,807.0 2145.6,804.3 2147.6,804.0 2149.6,812.3 2150.5,945.4 2241.2,945.4 2241.2,805.3 2243.8,805.0 2245.1,789.8 2247.8,792.4 2249.1,815.2 2250.8,807.9 2252.7,809.9 2255.4,806.6 2257.0,805.6 2258.4,786.1 2261.0,788.1 2262.3,810.6 2264.3,803.0 2266.3,805.0 2269.9,801.0 2271.2,784.2 2273.5,782.5 2275.5,802.3 2277.8,796.0 2279.2,781.8 2280.8,783.5 2281.5,786.8 2283.5,786.5 2286.8,777.9 2288.7,795.1 2291.1,788.4" fill="none" stroke="#4a86c5" stroke-width="2.5" stroke-linejoin="round"/>
<circle cx="1858.9" cy="1017.3" r="3.7" fill="#4a86c5"/>
<text x="1872.00" y="1025.00" font-size="14.5" font-weight="400" fill="#323130" text-anchor="start" textLength="122.80" lengthAdjust="spacingAndGlyphs" >percentPushEvents</text>
<text x="281.40" y="672.80" font-size="18.5" font-weight="400" fill="#242424" stroke="#242424" stroke-width="0.51" stroke-linejoin="round" text-anchor="start" textLength="80.40" lengthAdjust="spacingAndGlyphs" >Repo data</text>
<text x="281.00" y="690.80" font-size="13" font-weight="400" fill="#616161" text-anchor="start" textLength="178.40" lengthAdjust="spacingAndGlyphs" >1,000 rows · As of 4 minutes ago</text>
<circle cx="1457.8" cy="676.7" r="9.2" fill="none" stroke="#424242" stroke-width="1.3"/><rect x="1457.1" y="674.2" width="1.4" height="7" fill="#424242"/><circle cx="1457.8" cy="671.3" r="0.95" fill="#424242"/>
<circle cx="1487.5" cy="676.5" r="1.6" fill="#242424"/><circle cx="1493.5" cy="676.5" r="1.6" fill="#242424"/><circle cx="1499.5" cy="676.5" r="1.6" fill="#242424"/>
<rect x="306.9" y="717" width="1" height="19.6" fill="#d1d1d1"/>
<rect x="432.0" y="717" width="1" height="19.6" fill="#d1d1d1"/>
<rect x="658.9" y="717" width="1" height="19.6" fill="#d1d1d1"/>
<rect x="844.1" y="717" width="1" height="19.6" fill="#d1d1d1"/>
<rect x="1281.9" y="717" width="1" height="19.6" fill="#d1d1d1"/>
<text x="318.20" y="733.00" font-size="16" font-weight="400" fill="#242424" stroke="#242424" stroke-width="0.44" stroke-linejoin="round" text-anchor="start" textLength="14.60" lengthAdjust="spacingAndGlyphs" >Id</text>
<path d="M381.6 720.6 H394.3 L389.6 726.6 V732.8000000000001 L386.3 731.2 V726.6 Z" fill="none" stroke="#424242" stroke-width="1.2" stroke-linejoin="round"/>
<circle cx="413" cy="722.0" r="1.3" fill="#242424"/><circle cx="413" cy="726.6" r="1.3" fill="#242424"/><circle cx="413" cy="731.2" r="1.3" fill="#242424"/>
<text x="443.30" y="733.00" font-size="16" font-weight="400" fill="#242424" stroke="#242424" stroke-width="0.44" stroke-linejoin="round" text-anchor="start" textLength="76.90" lengthAdjust="spacingAndGlyphs" >RepoName</text>
<path d="M608.7 720.6 H621.4000000000001 L616.7 726.6 V732.8000000000001 L613.4000000000001 731.2 V726.6 Z" fill="none" stroke="#424242" stroke-width="1.2" stroke-linejoin="round"/>
<circle cx="639.9" cy="722.0" r="1.3" fill="#242424"/><circle cx="639.9" cy="726.6" r="1.3" fill="#242424"/><circle cx="639.9" cy="731.2" r="1.3" fill="#242424"/>
<text x="670.20" y="733.00" font-size="16" font-weight="400" fill="#242424" stroke="#242424" stroke-width="0.44" stroke-linejoin="round" text-anchor="start" textLength="33.80" lengthAdjust="spacingAndGlyphs" >Type</text>
<path d="M793 720.6 H805.7 L801 726.6 V732.8000000000001 L797.7 731.2 V726.6 Z" fill="none" stroke="#424242" stroke-width="1.2" stroke-linejoin="round"/>
<circle cx="824.8" cy="722.0" r="1.3" fill="#242424"/><circle cx="824.8" cy="726.6" r="1.3" fill="#242424"/><circle cx="824.8" cy="731.2" r="1.3" fill="#242424"/>
<text x="855.30" y="733.00" font-size="16" font-weight="400" fill="#242424" stroke="#242424" stroke-width="0.44" stroke-linejoin="round" text-anchor="start" textLength="38.20" lengthAdjust="spacingAndGlyphs" >Actor</text>
<path d="M1231.5 720.6 H1244.2 L1239.5 726.6 V732.8000000000001 L1236.2 731.2 V726.6 Z" fill="none" stroke="#424242" stroke-width="1.2" stroke-linejoin="round"/>
<circle cx="1262.8" cy="722.0" r="1.3" fill="#242424"/><circle cx="1262.8" cy="726.6" r="1.3" fill="#242424"/><circle cx="1262.8" cy="731.2" r="1.3" fill="#242424"/>
<text x="1293.50" y="733.00" font-size="16" font-weight="400" fill="#242424" stroke="#242424" stroke-width="0.44" stroke-linejoin="round" text-anchor="start" textLength="34.70" lengthAdjust="spacingAndGlyphs" >Repo</text>
<defs><clipPath id="gridclip"><rect x="282" y="749" width="1165" height="264"/></clipPath><clipPath id="repoclip"><rect x="1282" y="749" width="165" height="264"/></clipPath></defs>
<g clip-path="url(#gridclip)">
<rect x="660.2" y="750.2" width="184.4" height="29.3" fill="#c8ddf2"/>
<rect x="282" y="779.3" width="1165" height="1" fill="#e0e0e0"/>
<path d="M296 758.7 L301.6 764.0 L296 769.3" fill="none" stroke="#242424" stroke-width="1.3"/>
<text x="324.70" y="769.00" font-size="16" font-weight="400" fill="#242424" text-anchor="start" textLength="97.50" lengthAdjust="spacingAndGlyphs" >53,755,092,103</text>
<text x="443.30" y="769.00" font-size="16" font-weight="400" fill="#242424" text-anchor="start" textLength="138.50" lengthAdjust="spacingAndGlyphs" >arvaneq7lZa/Gainbot</text>
<text x="670.20" y="769.00" font-size="16" font-weight="400" fill="#242424" text-anchor="start" textLength="67.30" lengthAdjust="spacingAndGlyphs" >PushEvent</text>
<text x="855.30" y="769.00" font-size="16" font-weight="400" fill="#242424" text-anchor="start" textLength="413.50" lengthAdjust="spacingAndGlyphs" >{&quot;id&quot;:219833333,&quot;login&quot;:&quot;arvaneq7lZa&quot;,&quot;display_login&quot;:&quot;arvane...</text>
<g clip-path="url(#repoclip)">
<text x="1292.50" y="769.00" font-size="16" font-weight="400" fill="#242424" text-anchor="start" textLength="312.72" lengthAdjust="spacingAndGlyphs" >{&quot;id&quot;:1018253623,&quot;name&quot;:&quot;arvaneq7lZa/Gainbot&quot;</text>
</g>
<rect x="282" y="780.3" width="1165" height="30.3" fill="#fcfcfc"/>
<rect x="660.2" y="781.5" width="184.4" height="29.3" fill="#c8ddf2"/>
<rect x="282" y="810.6" width="1165" height="1" fill="#e0e0e0"/>
<path d="M296 790.0 L301.6 795.3 L296 800.6" fill="none" stroke="#242424" stroke-width="1.3"/>
<text x="324.70" y="800.30" font-size="16" font-weight="400" fill="#242424" text-anchor="start" textLength="97.50" lengthAdjust="spacingAndGlyphs" >53,755,092,104</text>
<text x="443.30" y="800.30" font-size="16" font-weight="400" fill="#242424" text-anchor="start" textLength="82.20" lengthAdjust="spacingAndGlyphs" >hattvr/hattvr</text>
<text x="670.20" y="800.30" font-size="16" font-weight="400" fill="#242424" text-anchor="start" textLength="67.30" lengthAdjust="spacingAndGlyphs" >PushEvent</text>
<text x="855.30" y="800.30" font-size="16" font-weight="400" fill="#242424" text-anchor="start" textLength="417.40" lengthAdjust="spacingAndGlyphs" >{&quot;id&quot;:41898282,&quot;login&quot;:&quot;github-actions[bot]&quot;,&quot;display_login&quot;:&quot;g...</text>
<g clip-path="url(#repoclip)">
<text x="1292.50" y="800.30" font-size="16" font-weight="400" fill="#242424" text-anchor="start" textLength="245.52" lengthAdjust="spacingAndGlyphs" >{&quot;id&quot;:469008192,&quot;name&quot;:&quot;hattvr/hattvr&quot;</text>
</g>
<rect x="660.2" y="812.8" width="184.4" height="29.3" fill="#5fae7b"/>
<rect x="282" y="841.9" width="1165" height="1" fill="#e0e0e0"/>
<path d="M296 821.3 L301.6 826.6 L296 831.9" fill="none" stroke="#242424" stroke-width="1.3"/>
<text x="324.70" y="831.60" font-size="16" font-weight="400" fill="#242424" text-anchor="start" textLength="97.50" lengthAdjust="spacingAndGlyphs" >53,755,092,105</text>
<text x="443.30" y="831.60" font-size="16" font-weight="400" fill="#242424" text-anchor="start" textLength="200.30" lengthAdjust="spacingAndGlyphs" >xq10riya-png/html-css-project</text>
<text x="670.20" y="831.60" font-size="16" font-weight="400" fill="#242424" text-anchor="start" textLength="78.40" lengthAdjust="spacingAndGlyphs" >CreateEvent</text>
<text x="855.30" y="831.60" font-size="16" font-weight="400" fill="#242424" text-anchor="start" textLength="417.40" lengthAdjust="spacingAndGlyphs" >{&quot;id&quot;:228305047,&quot;login&quot;:&quot;xq10riya-png&quot;,&quot;display_login&quot;:&quot;xq10ri...</text>
<g clip-path="url(#repoclip)">
<text x="1292.50" y="831.60" font-size="16" font-weight="400" fill="#242424" text-anchor="start" textLength="260.92" lengthAdjust="spacingAndGlyphs" >{&quot;id&quot;:1043605713,&quot;name&quot;:&quot;xq10riya-png&quot;</text>
</g>
<rect x="282" y="842.9" width="1165" height="30.3" fill="#fcfcfc"/>
<rect x="660.2" y="844.1" width="184.4" height="29.3" fill="#a463d1"/>
<rect x="282" y="873.2" width="1165" height="1" fill="#e0e0e0"/>
<path d="M296 852.6 L301.6 857.9 L296 863.2" fill="none" stroke="#242424" stroke-width="1.3"/>
<text x="324.70" y="862.90" font-size="16" font-weight="400" fill="#242424" text-anchor="start" textLength="97.50" lengthAdjust="spacingAndGlyphs" >53,755,092,106</text>
<text x="443.30" y="862.90" font-size="16" font-weight="400" fill="#242424" text-anchor="start" textLength="151.60" lengthAdjust="spacingAndGlyphs" >jasperhabicht/leporello</text>
<text x="670.20" y="862.90" font-size="16" font-weight="400" fill="#242424" text-anchor="start" textLength="85.10" lengthAdjust="spacingAndGlyphs" >ReleaseEvent</text>
<text x="855.30" y="862.90" font-size="16" font-weight="400" fill="#242424" text-anchor="start" textLength="416.70" lengthAdjust="spacingAndGlyphs" >{&quot;id&quot;:6378801,&quot;login&quot;:&quot;jasperhabicht&quot;,&quot;display_login&quot;:&quot;jasperha...</text>
<g clip-path="url(#repoclip)">
<text x="1292.50" y="862.90" font-size="16" font-weight="400" fill="#242424" text-anchor="start" textLength="263.35" lengthAdjust="spacingAndGlyphs" >{&quot;id&quot;:1024924645,&quot;name&quot;:&quot;jasperhabicht&quot;</text>
</g>
<rect x="660.2" y="875.4" width="184.4" height="29.3" fill="#d9836b"/>
<rect x="282" y="904.5" width="1165" height="1" fill="#e0e0e0"/>
<path d="M296 883.9 L301.6 889.2 L296 894.5" fill="none" stroke="#242424" stroke-width="1.3"/>
<text x="324.70" y="894.20" font-size="16" font-weight="400" fill="#242424" text-anchor="start" textLength="97.50" lengthAdjust="spacingAndGlyphs" >53,755,092,107</text>
<text x="443.30" y="894.20" font-size="16" font-weight="400" fill="#242424" text-anchor="start" textLength="81.40" lengthAdjust="spacingAndGlyphs" >Rz-C/Mohist</text>
<text x="670.20" y="894.20" font-size="16" font-weight="400" fill="#242424" text-anchor="start" textLength="75.20" lengthAdjust="spacingAndGlyphs" >IssuesEvent</text>
<text x="855.30" y="894.20" font-size="16" font-weight="400" fill="#242424" text-anchor="start" textLength="414.70" lengthAdjust="spacingAndGlyphs" >{&quot;id&quot;:23317456,&quot;login&quot;:&quot;Mgazul&quot;,&quot;display_login&quot;:&quot;Mgazul&quot;,&quot;gra...</text>
<g clip-path="url(#repoclip)">
<text x="1292.50" y="894.20" font-size="16" font-weight="400" fill="#242424" text-anchor="start" textLength="248.73" lengthAdjust="spacingAndGlyphs" >{&quot;id&quot;:204267956,&quot;name&quot;:&quot;Rz-C/Mohist&quot;</text>
</g>
<rect x="282" y="905.5" width="1165" height="30.3" fill="#fcfcfc"/>
<rect x="660.2" y="906.7" width="184.4" height="29.3" fill="#d1677f"/>
<rect x="282" y="935.8" width="1165" height="1" fill="#e0e0e0"/>
<path d="M296 915.2 L301.6 920.5 L296 925.8" fill="none" stroke="#242424" stroke-width="1.3"/>
<text x="324.70" y="925.50" font-size="16" font-weight="400" fill="#242424" text-anchor="start" textLength="97.50" lengthAdjust="spacingAndGlyphs" >53,755,092,113</text>
<text x="443.30" y="925.50" font-size="16" font-weight="400" fill="#242424" text-anchor="start" textLength="129.70" lengthAdjust="spacingAndGlyphs" >yaacov/kubectl-mtv</text>
<text x="670.20" y="925.50" font-size="16" font-weight="400" fill="#242424" text-anchor="start" textLength="159.20" lengthAdjust="spacingAndGlyphs" >PullRequestReviewEvent</text>
<text x="855.30" y="925.50" font-size="16" font-weight="400" fill="#242424" text-anchor="start" textLength="410.70" lengthAdjust="spacingAndGlyphs" >{&quot;id&quot;:136622811,&quot;login&quot;:&quot;coderabbitai[bot]&quot;,&quot;display_login&quot;:&quot;c...</text>
<g clip-path="url(#repoclip)">
<text x="1292.50" y="925.50" font-size="16" font-weight="400" fill="#242424" text-anchor="start" textLength="214.78" lengthAdjust="spacingAndGlyphs" >{&quot;id&quot;:961738059,&quot;name&quot;:&quot;yaacov&quot;</text>
</g>
<rect x="660.2" y="938.0" width="184.4" height="29.3" fill="#c8ddf2"/>
<rect x="282" y="967.1" width="1165" height="1" fill="#e0e0e0"/>
<path d="M296 946.5 L301.6 951.8 L296 957.1" fill="none" stroke="#242424" stroke-width="1.3"/>
<text x="324.70" y="956.80" font-size="16" font-weight="400" fill="#242424" text-anchor="start" textLength="97.50" lengthAdjust="spacingAndGlyphs" >53,755,092,115</text>
<text x="443.30" y="956.80" font-size="16" font-weight="400" fill="#242424" text-anchor="start" textLength="170.20" lengthAdjust="spacingAndGlyphs" >jbob383/supreme-waddle</text>
<text x="670.20" y="956.80" font-size="16" font-weight="400" fill="#242424" text-anchor="start" textLength="67.30" lengthAdjust="spacingAndGlyphs" >PushEvent</text>
<text x="855.30" y="956.80" font-size="16" font-weight="400" fill="#242424" text-anchor="start" textLength="417.40" lengthAdjust="spacingAndGlyphs" >{&quot;id&quot;:41898282,&quot;login&quot;:&quot;github-actions[bot]&quot;,&quot;display_login&quot;:&quot;g...</text>
<g clip-path="url(#repoclip)">
<text x="1292.50" y="956.80" font-size="16" font-weight="400" fill="#242424" text-anchor="start" textLength="228.56" lengthAdjust="spacingAndGlyphs" >{&quot;id&quot;:1043137209,&quot;name&quot;:&quot;jbob383&quot;</text>
</g>
<rect x="282" y="968.1" width="1165" height="30.3" fill="#fcfcfc"/>
<rect x="660.2" y="969.3" width="184.4" height="29.3" fill="#c8ddf2"/>
<rect x="282" y="998.4" width="1165" height="1" fill="#e0e0e0"/>
<path d="M296 977.8 L301.6 983.1 L296 988.4" fill="none" stroke="#242424" stroke-width="1.3"/>
<text x="324.70" y="988.10" font-size="16" font-weight="400" fill="#242424" text-anchor="start" textLength="97.50" lengthAdjust="spacingAndGlyphs" >53,755,092,118</text>
<text x="443.30" y="988.10" font-size="16" font-weight="400" fill="#242424" text-anchor="start" textLength="137.70" lengthAdjust="spacingAndGlyphs" >sealbell/sora-prompt</text>
<text x="670.20" y="988.10" font-size="16" font-weight="400" fill="#242424" text-anchor="start" textLength="67.30" lengthAdjust="spacingAndGlyphs" >PushEvent</text>
<text x="855.30" y="988.10" font-size="16" font-weight="400" fill="#242424" text-anchor="start" textLength="417.40" lengthAdjust="spacingAndGlyphs" >{&quot;id&quot;:41898282,&quot;login&quot;:&quot;github-actions[bot]&quot;,&quot;display_login&quot;:&quot;g...</text>
<g clip-path="url(#repoclip)">
<text x="1292.50" y="988.10" font-size="16" font-weight="400" fill="#242424" text-anchor="start" textLength="218.02" lengthAdjust="spacingAndGlyphs" >{&quot;id&quot;:762645410,&quot;name&quot;:&quot;sealbell&quot;</text>
</g>
<rect x="660.2" y="1000.6" width="184.4" height="29.3" fill="#c8ddf2"/>
<rect x="282" y="1029.7" width="1165" height="1" fill="#e0e0e0"/>
<path d="M296 1009.1 L301.6 1014.4 L296 1019.7" fill="none" stroke="#242424" stroke-width="1.3"/>
<text x="324.70" y="1019.40" font-size="16" font-weight="400" fill="#242424" text-anchor="start" textLength="97.50" lengthAdjust="spacingAndGlyphs" >53,755,092,122</text>
<text x="443.30" y="1019.40" font-size="16" font-weight="400" fill="#242424" text-anchor="start" textLength="152.10" lengthAdjust="spacingAndGlyphs" >junsaidesu/Libsararian</text>
<text x="670.20" y="1019.40" font-size="16" font-weight="400" fill="#242424" text-anchor="start" textLength="67.30" lengthAdjust="spacingAndGlyphs" >PushEvent</text>
<text x="855.30" y="1019.40" font-size="16" font-weight="400" fill="#242424" text-anchor="start" textLength="415.00" lengthAdjust="spacingAndGlyphs" >{&quot;id&quot;:90096640,&quot;login&quot;:&quot;junsaidesu&quot;,&quot;display_login&quot;:&quot;junsaides...</text>
<g clip-path="url(#repoclip)">
<text x="1292.50" y="1019.40" font-size="16" font-weight="400" fill="#242424" text-anchor="start" textLength="246.36" lengthAdjust="spacingAndGlyphs" >{&quot;id&quot;:1020144706,&quot;name&quot;:&quot;junsaidesu&quot;</text>
</g>
</g>
<path d="M1456.4 761.6 L1461.4 768.6 H1451.4 Z" fill="#8a8a8a" stroke="#8a8a8a" stroke-width="2.2" stroke-linejoin="round"/>
<rect x="1451" y="779.2" width="10.6" height="20.5" rx="5.3" fill="#8a8a8a"/>
<path d="M1456.4 1002.3 L1461.4 995.3 H1451.4 Z" fill="#8a8a8a" stroke="#8a8a8a" stroke-width="2.2" stroke-linejoin="round"/>
<path d="M292 1024 L301 1018.3 V1029.7 Z" fill="#8a8a8a" stroke="#8a8a8a" stroke-width="1" stroke-linejoin="round"/>
<rect x="311" y="1018.2" width="542.5" height="10.8" rx="5.4" fill="#8a8a8a"/>
<path d="M1438 1024 L1429 1018.3 V1029.7 Z" fill="#8a8a8a" stroke="#8a8a8a" stroke-width="1" stroke-linejoin="round"/>
<g fill="#242424"><rect x="1475.5" y="746.7" width="1.3" height="11"/><rect x="1479" y="746.7" width="1.3" height="11"/><rect x="1482.5" y="746.7" width="1.3" height="11"/><rect x="1486" y="746.7" width="1.3" height="11"/></g>
<text x="0.00" y="0.00" font-size="14.5" font-weight="400" fill="#242424" text-anchor="start" textLength="56.50" lengthAdjust="spacingAndGlyphs" transform="translate(1476.2,768) rotate(90)">Columns</text>
</svg></body></html>
